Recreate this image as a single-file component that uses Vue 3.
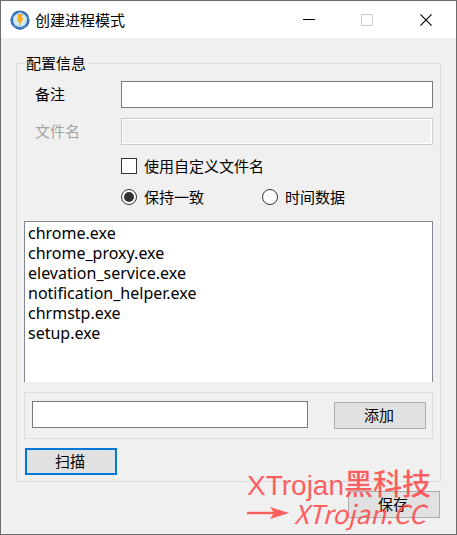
<script setup>
import { ref } from 'vue'

const remark = ref('')
const fileName = ref('')
const useCustomName = ref(false)
const dataMode = ref('same')
const newItem = ref('')
const files = ref([
  'chrome.exe',
  'chrome_proxy.exe',
  'elevation_service.exe',
  'notification_helper.exe',
  'chrmstp.exe',
  'setup.exe'
])

function addItem() {
  const name = newItem.value.trim()
  if (name) {
    files.value.push(name)
    newItem.value = ''
  }
}
</script>

<template>
  <main class="window">
    <header class="titlebar">
      <svg class="app-icon" viewBox="0 0 20 20" aria-hidden="true">
        <circle cx="10" cy="10" r="8.2" fill="#d9efee" stroke="#3f7fc4" stroke-width="2.6" />
        <circle cx="10" cy="10" r="9" fill="none" stroke="#2860a8" stroke-width="1" stroke-dasharray="7 4.3" />
        <path d="M10 2.6 16.6 7.6 14.4 15.6H5.6L3.4 7.6Z" fill="#d9efee" stroke="#a8d4ea" stroke-width="0.8" />
        <path d="M8.2 4h4.4l-1 4h2.2L8.6 17l.6-5.4H6.8Z" fill="#fbab1c" />
      </svg>
      <h1 class="title">创建进程模式</h1>
      <div class="controls">
        <button type="button" aria-label="最小化">
          <svg viewBox="0 0 12 12"><path d="M0 5.5h12" stroke="#000" /></svg>
        </button>
        <button type="button" aria-label="最大化" disabled>
          <svg viewBox="0 0 12 12"><path d="M.5.5h11v11H.5Z" fill="none" stroke="#ccc" /></svg>
        </button>
        <button type="button" aria-label="关闭">
          <svg viewBox="0 0 12 12"><path d="M.4.4l11.2 11.2M11.6.4.4 11.6" stroke="#000" stroke-width="1.1" /></svg>
        </button>
      </div>
    </header>

    <form class="body" @submit.prevent>
      <fieldset class="group">
        <legend>配置信息</legend>

        <div class="fields">
          <label class="label" for="remark">备注</label>
          <input id="remark" v-model="remark" class="text" type="text" />
          <label class="label muted" for="file-name">文件名</label>
          <input id="file-name" v-model="fileName" class="text" type="text" disabled />
        </div>

        <div class="choices">
          <label class="choice wide">
            <input v-model="useCustomName" type="checkbox" />使用自定义文件名
          </label>
          <label class="choice">
            <input v-model="dataMode" type="radio" name="mode" value="same" />保持一致
          </label>
          <label class="choice">
            <input v-model="dataMode" type="radio" name="mode" value="time" />时间数据
          </label>
        </div>

        <select class="files" size="8" multiple aria-label="文件列表">
          <option v-for="file in files" :key="file">{{ file }}</option>
        </select>

        <div class="add-row">
          <input v-model="newItem" class="text" type="text" aria-label="添加文件" />
          <button class="button" type="button" @click="addItem">添加</button>
        </div>

        <button class="button focused" type="button">扫描</button>
      </fieldset>

      <div class="footer">
        <button class="button" type="submit">保存</button>
        <div class="mark">
          <span class="mark-name">XTrojan<span class="mark-han">黑科技</span></span>
          <span class="mark-site">
            <svg viewBox="0 0 42 14" aria-hidden="true">
              <path d="M0 7h28" stroke="currentColor" stroke-width="2.4" />
              <path d="M23 1 42 7 23 13l4-6Z" fill="currentColor" />
            </svg>
            XTrojan.CC
          </span>
        </div>
      </div>
    </form>
  </main>
</template>

<style>
body {
  margin: 0;
}
</style>

<style scoped>
.window {
  box-sizing: border-box;
  border: 1px solid #6c6c6c;
  background: #f0f0f0;
  color: #000;
  font-family: "Noto Sans CJK SC", sans-serif;
  font-size: 15px;
  line-height: 22px;
}

.window *,
.window *::before {
  box-sizing: border-box;
}

.titlebar {
  display: flex;
  align-items: center;
  height: 37px;
  padding-left: 9px;
  background: #fff;
}

.app-icon {
  width: 20px;
  height: 20px;
  margin-right: 5px;
}

.title {
  flex: 1;
  margin: 0;
  font-size: 15px;
  font-weight: 400;
}

.controls {
  display: flex;
  align-self: stretch;
}

.controls button {
  display: grid;
  place-items: center;
  width: 58px;
  padding: 0;
  border: 0;
  background: none;
}

.controls button:last-child {
  width: 60px;
}

.controls svg {
  width: 12px;
  height: 12px;
}

.body {
  padding: 14px 15px 16px;
}

.group {
  min-width: 0;
  margin: 0;
  padding: 7px 7px 6px;
  border: 1px solid #dcdcdc;
}

legend {
  padding: 0 2px;
}

.fields {
  display: grid;
  grid-template-columns: 97px 1fr;
  row-gap: 10px;
}

.label {
  padding: 2px 0 0 11px;
}

.muted {
  color: #a3a3a3;
}

.text {
  width: 100%;
  min-width: 0;
  height: 27px;
  margin: 0;
  padding: 0 4px;
  border: 1px solid #7a7a7a;
  border-radius: 0;
  background: #fff;
  font: inherit;
}

.text:disabled {
  border-color: #ccc;
  background: #f0f0f0;
  box-shadow: inset 0 0 0 1px #fff;
}

.choices {
  display: grid;
  grid-template-columns: 141px 1fr;
  row-gap: 9px;
  padding: 10px 0 13px 97px;
}

.choice {
  display: flex;
  align-items: center;
  gap: 7px;
}

.wide {
  grid-column: 1 / -1;
}

.choice input {
  appearance: none;
  display: grid;
  place-items: center;
  width: 16px;
  height: 16px;
  margin: 0;
  border: 1px solid #333;
  background: #fff;
}

.choice input[type="radio"] {
  border-radius: 50%;
}

.choice input:checked::before {
  content: "";
  width: 10px;
  height: 10px;
  background: #333;
}

.choice input[type="radio"]:checked::before {
  border-radius: 50%;
}

.files {
  display: block;
  width: 100%;
  height: 161px;
  padding: 0 3px;
  border: 1px solid #828790;
  border-bottom: 0;
  border-radius: 0;
  background: #fff;
  color: #000;
  font-family: "Noto Sans", sans-serif;
  font-size: 16px;
  overflow: hidden;
}

.files option {
  height: 20px;
  min-height: 20px;
  padding: 0;
  line-height: 20px;
}

.add-row {
  display: flex;
  gap: 26px;
  margin: 10px 0 9px;
  padding: 8px 6px 10px 7px;
  border: 1px solid #dcdcdc;
}

.add-row .text {
  flex: 1;
}

.button {
  flex: none;
  width: 92px;
  height: 27px;
  margin: 0;
  padding: 0 2px 2px 0;
  border: 1px solid #adadad;
  background: #e1e1e1;
  color: #000;
  font: inherit;
  line-height: 22px;
}

.add-row .button {
  margin: 1px 0 -1px;
}

.group > .button {
  display: block;
  margin-left: 1px;
}

.focused {
  border: 2px solid #0078d7;
}

.footer {
  position: relative;
  display: flex;
  justify-content: flex-end;
  padding: 9px 1px 0 0;
}

.mark {
  position: absolute;
  right: 8px;
  bottom: -12px;
  display: flex;
  flex-direction: column;
  width: 186px;
  color: #ff3c3c;
  opacity: 0.8;
  white-space: nowrap;
  pointer-events: none;
}

.mark-name {
  font-family: "Liberation Sans", sans-serif;
  font-size: 28px;
  line-height: 32px;
}

.mark-han {
  font-family: "Noto Sans CJK SC", sans-serif;
  font-size: 29px;
  font-weight: 500;
}

.mark-site {
  display: flex;
  align-items: center;
  gap: 5px;
  padding-bottom: 6px;
  font-size: 26px;
  font-style: italic;
  line-height: 22px;
}

.mark-site svg {
  flex: none;
  width: 42px;
  height: 14px;
}
</style>
